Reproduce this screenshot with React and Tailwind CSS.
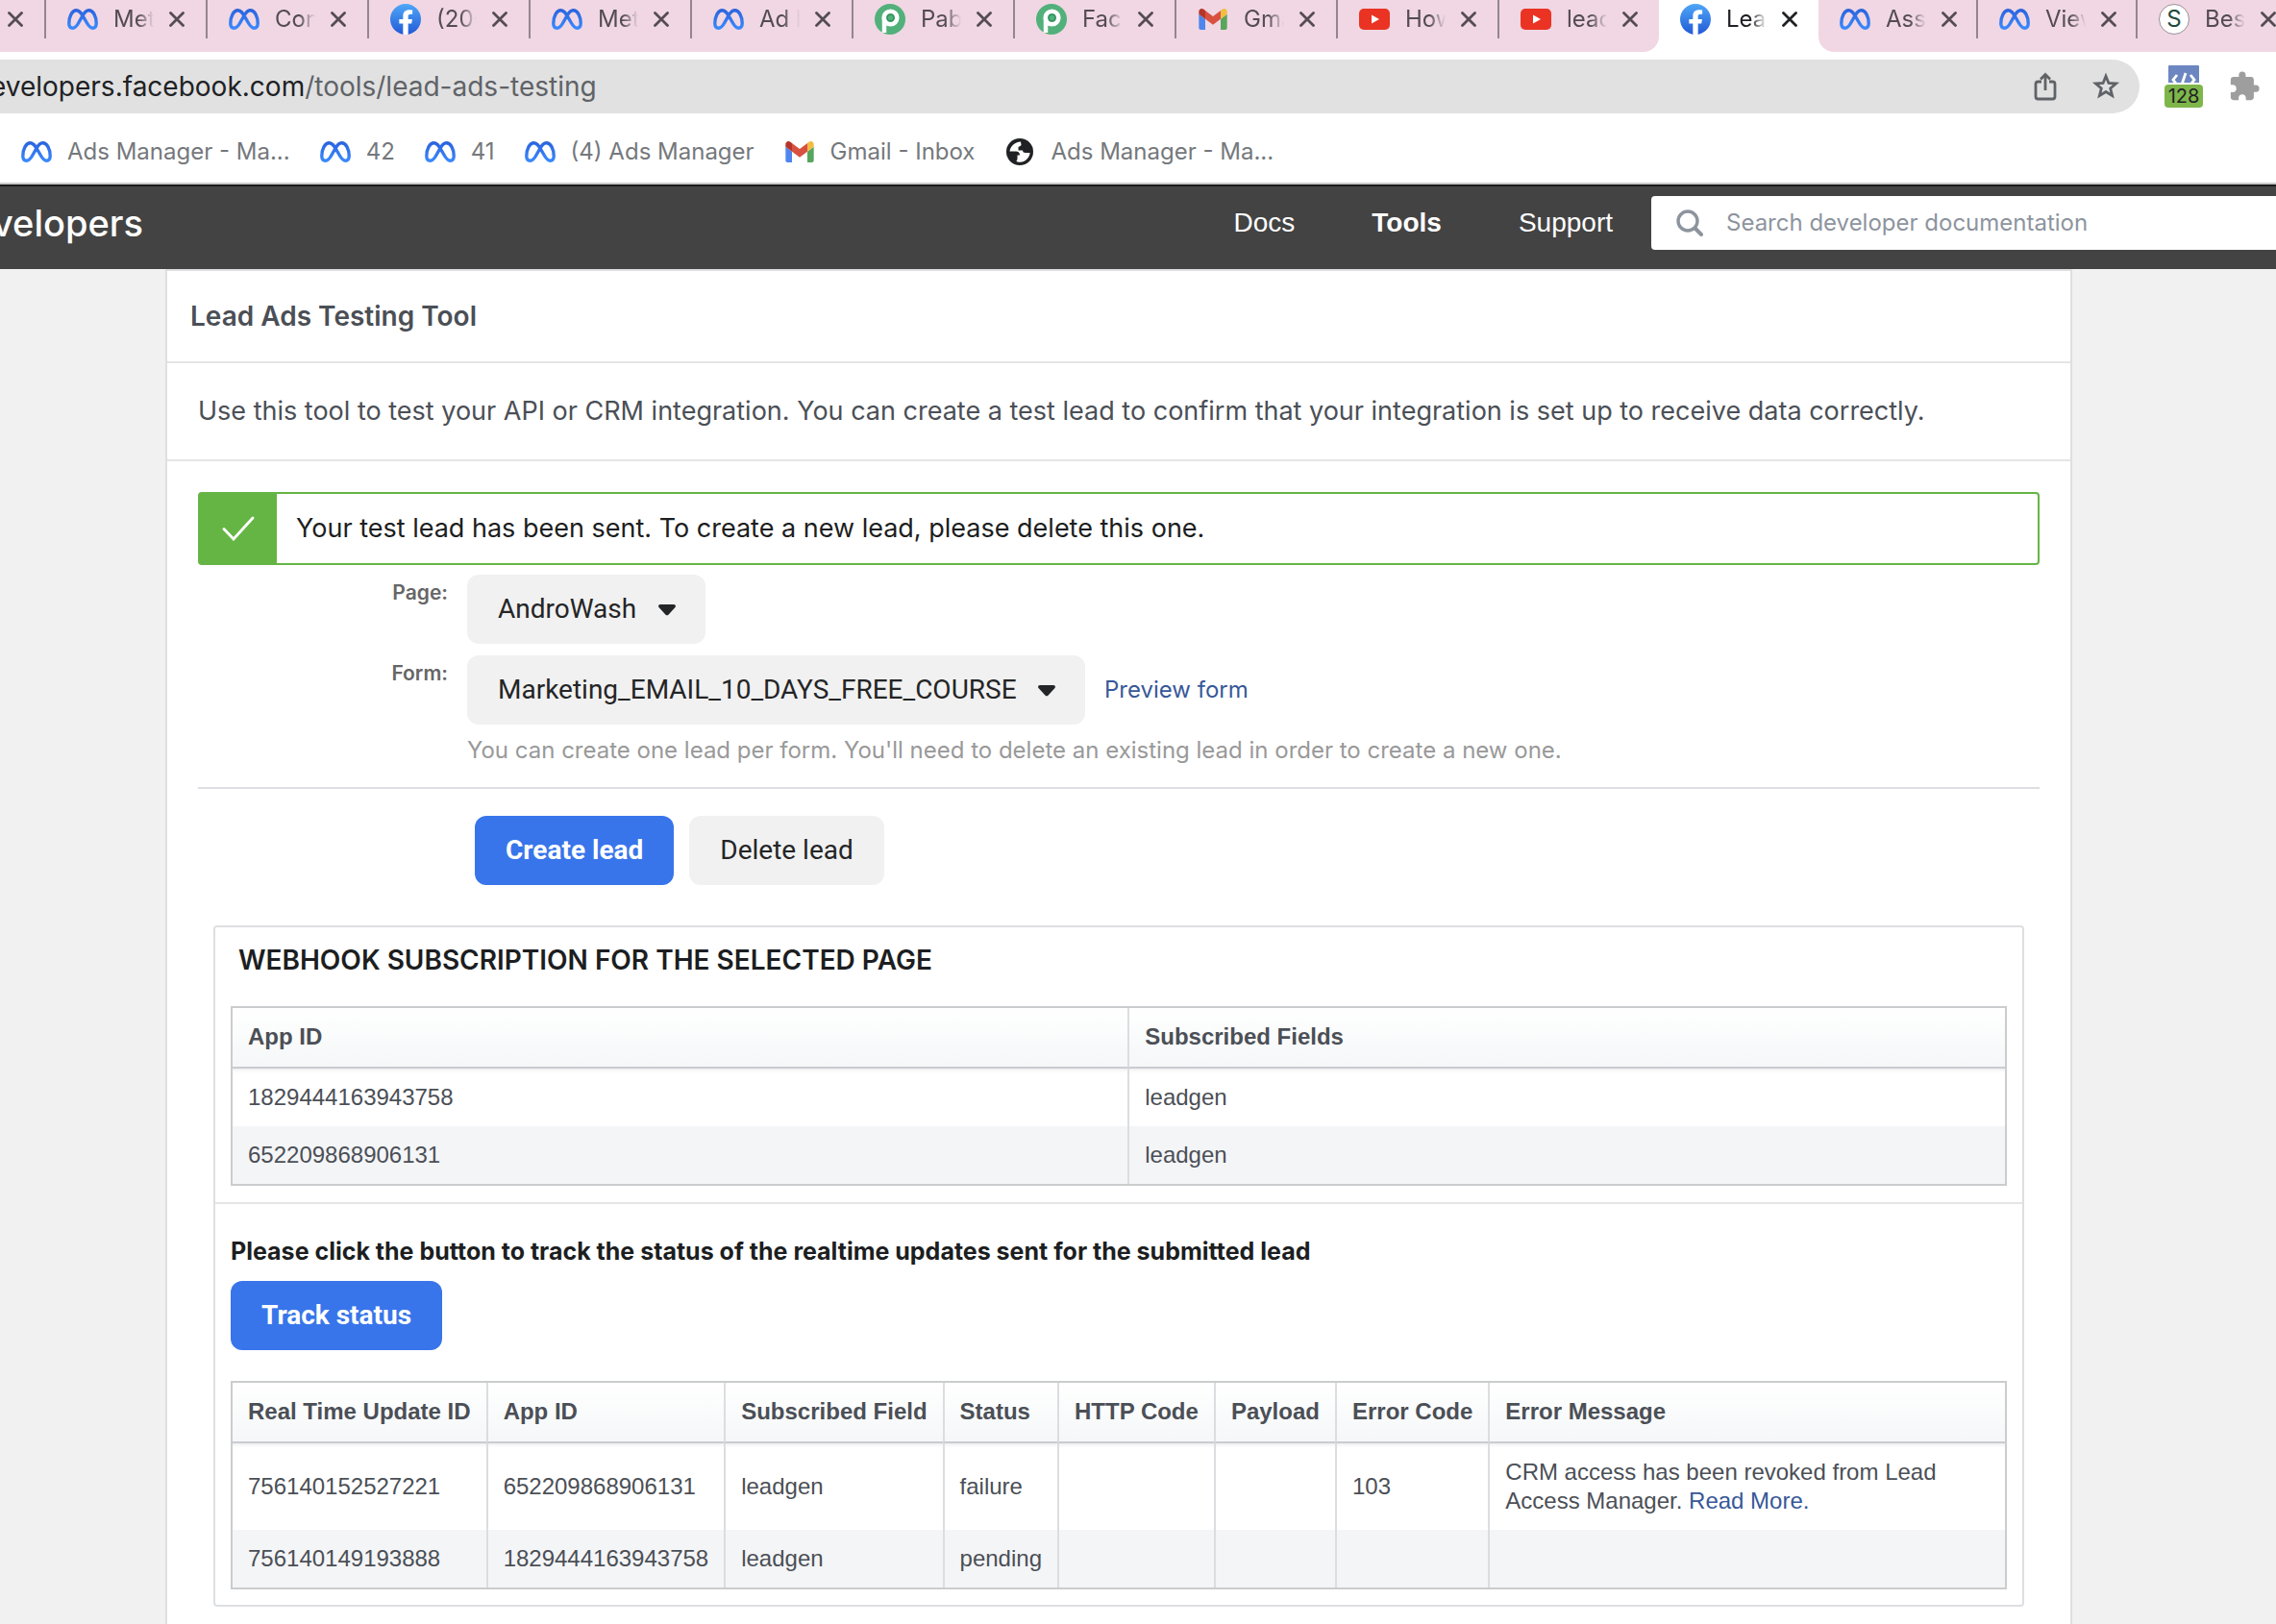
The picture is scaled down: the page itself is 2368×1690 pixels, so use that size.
import { MdExtension } from 'react-icons/md';

const leftTabs = [
  { icon: 'meta', title: 'Met' },
  { icon: 'meta', title: 'Con' },
  { icon: 'facebook', title: '(20-' },
  { icon: 'meta', title: 'Met' },
  { icon: 'meta', title: 'Ad l' },
  { icon: 'pabbly', title: 'Pab' },
  { icon: 'pabbly', title: 'Face' },
  { icon: 'gmail', title: 'Gma' },
  { icon: 'youtube', title: 'How' },
  { icon: 'youtube', title: 'lead' },
];

const rightTabs = [
  { icon: 'meta', title: 'Ass' },
  { icon: 'meta', title: 'View' },
  { icon: 'letter', title: 'Bes' },
];

const bookmarks = [
  { icon: 'meta', title: 'Ads Manager - Ma...' },
  { icon: 'meta', title: '42' },
  { icon: 'meta', title: '41' },
  { icon: 'meta', title: '(4) Ads Manager' },
  { icon: 'gmail', title: 'Gmail - Inbox' },
  { icon: 'globe', title: 'Ads Manager - Ma...' },
];

const subscriptions = [
  ['1829444163943758', 'leadgen'],
  ['652209868906131', 'leadgen'],
];

const updateHeaders = [
  'Real Time Update ID',
  'App ID',
  'Subscribed Field',
  'Status',
  'HTTP Code',
  'Payload',
  'Error Code',
  'Error Message',
];

const updates = [
  {
    cells: ['756140152527221', '652209868906131', 'leadgen', 'failure', '', '', '103'],
    message: 'CRM access has been revoked from Lead Access Manager.',
  },
  {
    cells: ['756140149193888', '1829444163943758', 'leadgen', 'pending', '', '', ''],
    message: '',
  },
];

function MetaIcon() {
  return (
    <svg width="32" height="22" viewBox="0 0 32 22" fill="none" aria-hidden="true">
      <defs>
        <linearGradient id="metaBlue" x1="0" y1="22" x2="0" y2="0" gradientUnits="userSpaceOnUse">
          <stop offset="0" stopColor="#3b8bff" />
          <stop offset="1" stopColor="#2a62dc" />
        </linearGradient>
      </defs>
      <path
        d="M1.8 15.5C1.8 8 5 1.8 9.6 1.8c3 0 4.8 2.800 7.400 7.200l3.500 6c1.900 3.200 3.500 5.200 5.900 5.200 2.600 0 3.800-1.900 3.800-4.900C30.200 8 27 1.800 22.400 1.800c-2.800 0-4.600 2.200-6.800 6.200l-4 7c-2 3.600-3.600 5.200-6 5.200-2.400 0-3.800-1.800-3.800-4.700Z"
        stroke="url(#metaBlue)"
        strokeWidth="3.4"
      />
    </svg>
  );
}

function FacebookIcon() {
  return (
    <svg width="32" height="32" viewBox="0 0 36 36" aria-hidden="true">
      <defs>
        <linearGradient id="fbBlue" x1="0" y1="0" x2="0" y2="1">
          <stop offset="0" stopColor="#4fa7f8" />
          <stop offset="1" stopColor="#2259d6" />
        </linearGradient>
      </defs>
      <circle cx="18" cy="18" r="18" fill="url(#fbBlue)" />
      <path
        fill="#fff"
        d="M25 23l.8-5H21v-3.5c0-1.4.5-2.5 2.7-2.5H26V7.4c-1.3-.2-2.7-.4-4-.4-4.1 0-7 2.5-7 7v4h-4.5v5H15v12.7c1 .2 2 .3 3 .3s2-.1 3-.3V23h4z"
      />
    </svg>
  );
}

function PabblyIcon() {
  return (
    <svg width="32" height="32" viewBox="0 0 32 32" fill="none" aria-hidden="true">
      <circle cx="16" cy="16" r="16" fill="#52b07b" />
      <path d="M10 30V15" stroke="#fff" strokeWidth="4.5" />
      <circle cx="16.5" cy="14.5" r="6.8" stroke="#fff" strokeWidth="4.6" />
      <circle cx="16.5" cy="14.5" r="3.4" stroke="#2f8f5c" strokeWidth="1.2" />
    </svg>
  );
}

function GmailIcon() {
  return (
    <svg width="30" height="22" viewBox="52 42 88 66" aria-hidden="true">
      <path fill="#4f86ee" d="M58 108h14V74L52 59v43c0 3.32 2.69 6 6 6" />
      <path fill="#58a55c" d="M120 108h14c3.32 0 6-2.69 6-6V59l-20 15" />
      <path fill="#f1bd42" d="M120 48v26l20-15v-8c0-7.42-8.47-11.65-14.4-7.2" />
      <path fill="#d85140" d="M72 74V48l24 18 24-18v26L96 92" />
      <path fill="#b5352a" d="M52 51v8l20 15V48l-5.6-4.2c-5.94-4.45-14.4-.22-14.4 7.2" />
    </svg>
  );
}

function YoutubeIcon() {
  return (
    <svg width="32" height="22" viewBox="0 0 32 22" aria-hidden="true">
      <rect width="32" height="22" rx="5" fill="#ea3323" />
      <path d="M13 6.5v9l8-4.5z" fill="#fff" />
    </svg>
  );
}

function GlobeIcon() {
  return (
    <svg width="28" height="28" viewBox="0 0 28 28" aria-hidden="true">
      <circle cx="14" cy="14" r="14" fill="#202124" />
      <path
        fill="#fff"
        d="M15 3.5C8.5 4 4 8.5 3.5 13.5H10c2.5 0 4 1.5 4 4h-2.5V21c0 1.5-1 2-1 3 1 .5 2 .7 3.5.7 6 0 10-4.5 10.6-9.7H20c-1.8 0-3-.8-3-2.5h-4.5v-3c0-1.5 3-1 3-3z"
      />
    </svg>
  );
}

function SiteIcon({ name }) {
  return (
    <span className="flex w-8 shrink-0 justify-center">
      {name === 'meta' && <MetaIcon />}
      {name === 'facebook' && <FacebookIcon />}
      {name === 'pabbly' && <PabblyIcon />}
      {name === 'gmail' && <GmailIcon />}
      {name === 'youtube' && <YoutubeIcon />}
      {name === 'globe' && <GlobeIcon />}
      {name === 'letter' && (
        <span className="flex size-8 items-center justify-center rounded-full border border-[#9a8f96] bg-white text-2xl text-[#1f4a3d]">
          S
        </span>
      )}
    </span>
  );
}

function CloseButton() {
  return (
    <button type="button" aria-label="Close tab" className="shrink-0">
      <svg width="16" height="16" viewBox="0 0 16 16" stroke="currentColor" strokeWidth="2.8" strokeLinecap="round">
        <path d="M1.5 1.5l13 13M14.5 1.5l-13 13" />
      </svg>
    </button>
  );
}

function Tab({ icon, title, className }) {
  return (
    <div className={`flex h-10 shrink-0 items-center gap-4 pl-[22px] ${className}`}>
      <SiteIcon name={icon} />
      <span className="w-[42px] overflow-hidden whitespace-nowrap text-2xl [mask-image:linear-gradient(to_right,black_60%,transparent)]">
        {title}
      </span>
      <CloseButton />
    </div>
  );
}

function TabStrip() {
  return (
    <div className="flex h-[54px] overflow-hidden bg-white text-[#544c52]">
      <div className="flex shrink-0 rounded-br-2xl bg-[#f0d7e3]">
        <div className="flex h-10 w-[46px] items-center pl-2">
          <CloseButton />
        </div>
        {leftTabs.map((tab, i) => (
          <Tab key={i} {...tab} className="w-[168px] border-l-2 border-[#95868e]" />
        ))}
      </div>
      <Tab icon="facebook" title="Lea" className="w-[166px] text-[#202124]" />
      <div className="flex flex-1 rounded-bl-2xl bg-[#f0d7e3]">
        {rightTabs.map((tab, i) => (
          <Tab
            key={i}
            {...tab}
            className={i === 0 ? 'w-[164px]' : 'w-[166px] border-l-2 border-[#95868e]'}
          />
        ))}
      </div>
    </div>
  );
}

function Toolbar() {
  return (
    <div className="flex items-center gap-[26px] bg-white pt-2 pr-4">
      <div className="flex h-14 flex-1 items-center rounded-r-full bg-[#e1e1e1] pr-5 text-[#5f6368]">
        <div className="-ml-2.5 flex-1 text-[28px] whitespace-nowrap">
          <span className="text-[#202124]">evelopers.facebook.com</span>/tools/lead-ads-testing
        </div>
        <button type="button" aria-label="Share" className="mr-9">
          <svg width="24" height="30" viewBox="0 0 24 30" fill="none" stroke="currentColor" strokeWidth="2.8">
            <path d="M8 10H4.5A2.5 2.5 0 0 0 2 12.5v13A2.5 2.5 0 0 0 4.5 28h15a2.5 2.5 0 0 0 2.5-2.5v-13a2.5 2.5 0 0 0-2.5-2.5H16" />
            <path d="M12 19V3M7 7.5l5-5 5 5" />
          </svg>
        </button>
        <button type="button" aria-label="Bookmark this page">
          <svg width="30" height="30" viewBox="0 0 30 30" fill="none" stroke="currentColor" strokeWidth="2.8">
            <path d="M15 4.200l2.900 7.200 7.700.6-5.900 5 1.900 7.600-6.600-4.100-6.600 4.100 1.900-7.600-5.900-5 7.700-.6z" />
          </svg>
        </button>
      </div>
      <button type="button" aria-label="Extension, 128 events" className="flex w-10 flex-col items-center gap-0.5">
        <svg width="32" height="18" viewBox="0 0 32 18" fill="none" aria-hidden="true">
          <path d="M0 1a1 1 0 0 1 1-1h30a1 1 0 0 1 1 1v17H0z" fill="#6c86c1" />
          <path d="M9 10l-4 5 3 4M23 10l4 5-3 4M18 8l-4 12" stroke="#fff" strokeWidth="2.8" />
        </svg>
        <span className="w-10 rounded bg-[#7eb64a] text-center text-xl leading-6 text-[#202124]">128</span>
      </button>
      <button type="button" aria-label="Extensions" className="text-[#9e9e9e]">
        <MdExtension size={34} />
      </button>
    </div>
  );
}

function BookmarkBar() {
  return (
    <nav className="flex h-[74px] items-center gap-[31px] overflow-hidden border-b-2 border-[#c9c9c9] bg-white pt-2 pl-[22px] text-2xl text-[#75787c]">
      {bookmarks.map((item, i) => (
        <a key={i} href="#" className="flex shrink-0 items-center gap-4 whitespace-nowrap">
          <SiteIcon name={item.icon} />
          {item.title}
        </a>
      ))}
    </nav>
  );
}

function SiteHeader() {
  return (
    <header className="flex items-center overflow-hidden border-t-2 border-[#1c1c1c] bg-[#434343] pt-2.5 pb-5 text-white">
      <a href="#" className="-ml-2 text-[38px] leading-10 font-medium">velopers</a>
      <nav className="mr-10 ml-auto flex gap-20 font-['Liberation_Sans',sans-serif] text-[28px]">
        <a href="#">Docs</a>
        <a href="#" className="font-bold">Tools</a>
        <a href="#">Support</a>
      </nav>
      <label className="flex h-14 w-[650px] items-center gap-6 rounded-l bg-white pl-[26px] text-[#8d949e]">
        <svg width="28" height="28" viewBox="0 0 28 28" fill="none" stroke="currentColor" strokeLinecap="round" aria-hidden="true">
          <circle cx="12" cy="12" r="10" strokeWidth="3.4" />
          <path d="M20 20l6 6" strokeWidth="4" />
        </svg>
        <span className="sr-only">Search developer documentation</span>
        <input
          type="search"
          placeholder="Search developer documentation"
          className="min-w-0 flex-1 text-2xl text-gray-800 outline-none placeholder:text-[#8d949e]"
        />
      </label>
    </header>
  );
}

function Dropdown({ id, value }) {
  return (
    <div className="relative">
      <select
        id={id}
        className="h-[72px] appearance-none rounded-xl bg-[#f1f1f1] pr-[71px] pl-8 font-[Roboto,sans-serif] text-[28px] text-[#242526]"
      >
        <option>{value}</option>
      </select>
      <svg
        className="pointer-events-none absolute top-[31px] right-[31px]"
        width="18"
        height="12"
        viewBox="0 0 18 12"
        fill="#242526"
        aria-hidden="true"
      >
        <path d="M2 0h14c1.8 0 2.6 2 1.3 3.2l-6.9 7.5c-.8.8-2 .8-2.8 0L.7 3.2C-.6 2 .2 0 2 0z" />
      </svg>
    </div>
  );
}

function HeaderCell({ children, className = '' }) {
  return (
    <th
      className={`border-b-2 border-b-[#c9ccd1] border-l-[#dcdde0] bg-linear-to-b from-white to-[#f5f7f8] px-4 pt-[15px] pb-4 text-left font-bold whitespace-nowrap not-first:border-l-2 ${className}`}
    >
      {children}
    </th>
  );
}

function Cell({ children, className = '' }) {
  return (
    <td className={`border-[#dcdde0] px-4 py-[15px] not-first:border-l-2 ${className}`}>{children}</td>
  );
}

function SubscriptionTable() {
  return (
    <table className="w-full border-separate border-spacing-0 border-2 border-[#cbcccd] font-['Liberation_Sans',sans-serif] text-2xl leading-[30px] text-[#4b4f56]">
      <thead>
        <tr>
          <HeaderCell className="w-[50.5%]">App ID</HeaderCell>
          <HeaderCell>Subscribed Fields</HeaderCell>
        </tr>
      </thead>
      <tbody>
        {subscriptions.map(([appId, field]) => (
          <tr key={appId} className="first:shadow-[inset_0_5px_4px_-4px_rgba(0,0,0,0.1)] even:bg-[#f4f5f7]">
            <Cell>{appId}</Cell>
            <Cell>{field}</Cell>
          </tr>
        ))}
      </tbody>
    </table>
  );
}

function UpdatesTable() {
  return (
    <table className="w-full border-separate border-spacing-0 border-2 border-[#cbcccd] font-['Liberation_Sans',sans-serif] text-2xl leading-[30px] text-[#4b4f56]">
      <thead>
        <tr>
          {updateHeaders.map((title) => (
            <HeaderCell key={title} className="last:w-full">{title}</HeaderCell>
          ))}
        </tr>
      </thead>
      <tbody>
        {updates.map((update) => (
          <tr
            key={update.cells[0]}
            className="first:shadow-[inset_0_5px_4px_-4px_rgba(0,0,0,0.1)] even:bg-[#f4f5f7]"
          >
            {update.cells.map((cell, i) => (
              <Cell key={i}>{cell}</Cell>
            ))}
            <Cell>
              {update.message && (
                <>
                  {update.message} <a href="#" className="text-[#385898]">Read More.</a>
                </>
              )}
            </Cell>
          </tr>
        ))}
      </tbody>
    </table>
  );
}

export default function App() {
  return (
    <div className="flex min-h-screen flex-col overflow-x-hidden bg-[#f1f1f1] font-[Inter,sans-serif]">
      <TabStrip />
      <Toolbar />
      <BookmarkBar />
      <SiteHeader />

      <main className="flex flex-1 flex-col pr-[212px] pl-[172px]">
        <div className="flex-1 border-x-2 border-t-2 border-[#dddfe2] bg-white">
          <h1 className="border-b-2 border-[#e5e5e5] px-6 py-[30px] text-[28px] leading-[34px] font-semibold text-[#4b4f56]">
            Lead Ads Testing Tool
          </h1>
          <p className="border-b-2 border-[#e5e5e5] px-8 py-8 text-[27px] leading-9 text-[#4b4f56]">
            Use this tool to test your API or CRM integration. You can create a test lead to confirm that
            your integration is set up to receive data correctly.
          </p>

          <div className="px-8 pt-8 pb-[18px]">
            <div className="flex h-[76px] items-stretch rounded border-2 border-[#65b545] text-[27px] text-[#1c1e21]">
              <div className="flex w-20 shrink-0 items-center justify-center bg-[#65b545]">
                <svg width="34" height="26" viewBox="0 0 34 26" fill="none" stroke="#fff" strokeWidth="2.8" strokeLinecap="round" aria-hidden="true">
                  <path d="M2 13.5L12 24 32 2" />
                </svg>
              </div>
              <p className="self-center pl-5">
                Your test lead has been sent. To create a new lead, please delete this one.
              </p>
            </div>

            <div className="mt-2.5 flex gap-5">
              <label htmlFor="page" className="w-[260px] shrink-0 pt-2 text-right text-[21px] leading-[22px] font-semibold text-[#666]">
                Page:
              </label>
              <Dropdown id="page" value="AndroWash" />
            </div>
            <div className="mt-3 flex gap-5">
              <label htmlFor="form" className="w-[260px] shrink-0 pt-2 text-right text-[21px] leading-[22px] font-semibold text-[#666]">
                Form:
              </label>
              <div>
                <div className="flex items-center gap-5">
                  <Dropdown id="form" value="Marketing_EMAIL_10_DAYS_FREE_COURSE" />
                  <a href="#" className="text-2xl text-[#385898]">Preview form</a>
                </div>
                <p className="mt-3 text-2xl leading-[30px] text-[#999]">
                  You can create one lead per form. You'll need to delete an existing lead in order to create a new one.
                </p>
              </div>
            </div>

            <hr className="mt-[23px] border-t-2 border-[#dddfe2]" />

            <div className="mt-7 flex gap-4 pl-72 font-[Roboto,sans-serif] text-[28px]">
              <button type="button" className="h-[72px] rounded-xl bg-[#3875ea] px-8 font-bold text-white">
                Create lead
              </button>
              <button type="button" className="h-[72px] rounded-xl bg-[#f1f1f1] px-8 text-[#242526]">
                Delete lead
              </button>
            </div>

            <section className="mx-4 mt-[42px] rounded border-2 border-[#dddfe2]">
              <div className="border-b-2 border-[#e5e5e5] px-4 pt-4 pb-[17px]">
                <h2 className="mb-[30px] px-2 text-[28px] leading-9 font-semibold text-[#1c1e21]">
                  WEBHOOK SUBSCRIPTION FOR THE SELECTED PAGE
                </h2>
                <SubscriptionTable />
              </div>
              <div className="px-4 pt-[34px] pb-4">
                <p className="text-[25px] leading-[30px] font-bold text-[#1c1e21]">
                  Please click the button to track the status of the realtime updates sent for the submitted lead
                </p>
                <button
                  type="button"
                  className="mt-4 mb-8 h-[72px] rounded-xl bg-[#3875ea] px-8 font-[Roboto,sans-serif] text-[28px] font-bold text-white"
                >
                  Track status
                </button>
                <UpdatesTable />
              </div>
            </section>
          </div>
        </div>
      </main>
    </div>
  );
}
